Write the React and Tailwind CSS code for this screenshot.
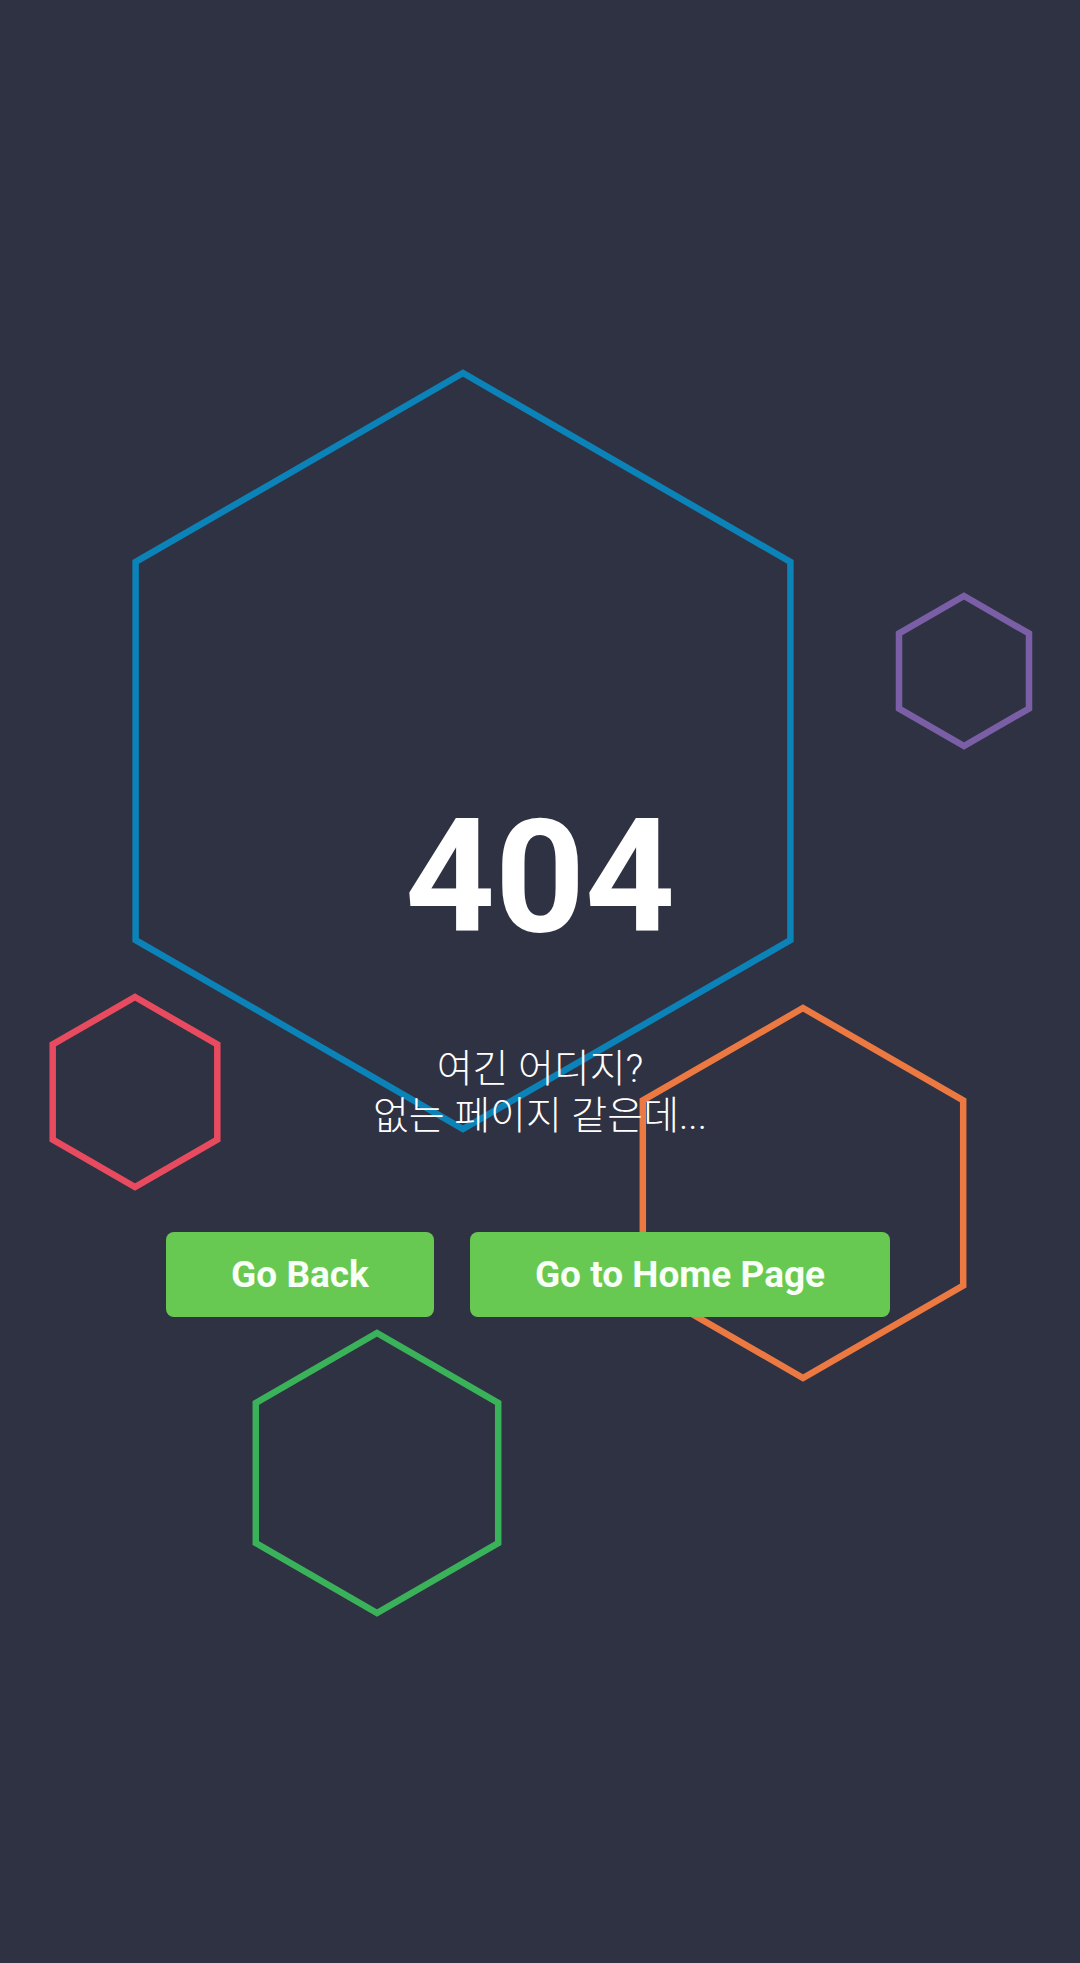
import React from 'react';

// Decorative outlined hexagons scattered behind the message
const hexagons = [
  { cx: 463, cy: 751, s: 378, color: '#0b83b8' },
  { cx: 964, cy: 671, s: 75, color: '#7b5fa6' },
  { cx: 135, cy: 1092, s: 95, color: '#e84b5f' },
  { cx: 803, cy: 1193, s: 185, color: '#ed7942' },
  { cx: 377, cy: 1473, s: 140, color: '#3ab25a' },
];

function hexPoints({ cx, cy, s }) {
  const w = s * Math.cos(Math.PI / 6);
  return [
    [cx, cy - s],
    [cx + w, cy - s / 2],
    [cx + w, cy + s / 2],
    [cx, cy + s],
    [cx - w, cy + s / 2],
    [cx - w, cy - s / 2],
  ]
    .map((p) => p.map((n) => n.toFixed(1)).join(','))
    .join(' ');
}

export default function App() {
  return (
    <div className="relative min-h-[1963px] w-full overflow-hidden bg-[#2f3242]">
      <svg
        className="absolute inset-0"
        width="1080"
        height="1963"
        viewBox="0 0 1080 1963"
        fill="none"
      >
        {hexagons.map((h, i) => (
          <polygon
            key={i}
            points={hexPoints(h)}
            stroke={h.color}
            strokeWidth="6.5"
            strokeLinejoin="miter"
          />
        ))}
      </svg>

      <div className="relative flex flex-col items-center pt-[799px]">
        <h1 className="font-['Roboto',sans-serif] text-[157px] font-bold leading-none text-white">
          404
        </h1>

        <p className="mt-[90px] text-center font-['Roboto','Noto_Sans_CJK_KR',sans-serif] text-[39px] font-light leading-[47px] text-white">
          여긴 어디지?
          <br />
          없는 페이지 같은데...
        </p>

        <div className="mt-[92px] flex gap-9 pr-6">
          <button className="h-[85px] w-[268px] rounded-lg bg-[#68c952] font-['Roboto',sans-serif] text-[37px] font-bold text-[#f8fff6]">
            Go Back
          </button>
          <button className="h-[85px] w-[420px] rounded-lg bg-[#68c952] font-['Roboto',sans-serif] text-[37px] font-bold text-[#f8fff6]">
            Go to Home Page
          </button>
        </div>
      </div>
    </div>
  );
}
